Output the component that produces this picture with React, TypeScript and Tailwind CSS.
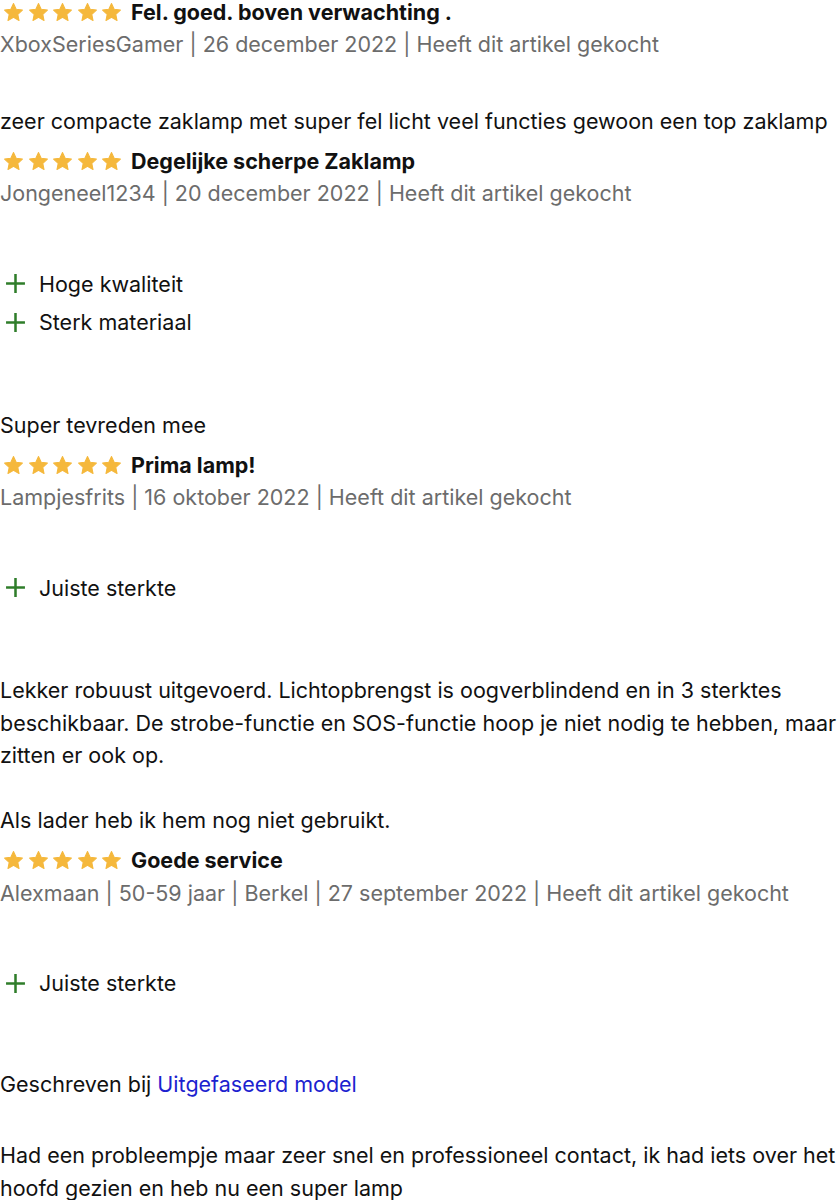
import React from 'react';

type Review = {
  title: string;
  meta: string;
  pros?: string[];
  writtenFor?: string;
  body: React.ReactNode;
};

const REVIEWS: Review[] = [
  {
    title: 'Fel. goed. boven verwachting .',
    meta: 'XboxSeriesGamer | 26 december 2022 | Heeft dit artikel gekocht',
    body: 'zeer compacte zaklamp met super fel licht veel functies gewoon een top zaklamp',
  },
  {
    title: 'Degelijke scherpe Zaklamp',
    meta: 'Jongeneel1234 | 20 december 2022 | Heeft dit artikel gekocht',
    pros: ['Hoge kwaliteit', 'Sterk materiaal'],
    body: 'Super tevreden mee',
  },
  {
    title: 'Prima lamp!',
    meta: 'Lampjesfrits | 16 oktober 2022 | Heeft dit artikel gekocht',
    pros: ['Juiste sterkte'],
    body: (
      <>
        Lekker robuust uitgevoerd. Lichtopbrengst is oogverblindend en in 3 sterktes beschikbaar. De strobe-functie
        en SOS-functie hoop je niet nodig te hebben, maar zitten er ook op.
        <br />
        <br />
        Als lader heb ik hem nog niet gebruikt.
      </>
    ),
  },
  {
    title: 'Goede service',
    meta: 'Alexmaan | 50-59 jaar | Berkel | 27 september 2022 | Heeft dit artikel gekocht',
    pros: ['Juiste sterkte'],
    writtenFor: 'Uitgefaseerd model',
    body: 'Had een probleempje maar zeer snel en professioneel contact, ik had iets over het hoofd gezien en heb nu een super lamp',
  },
];

function Star() {
  return (
    <svg viewBox="0 0 24 24" className="w-[21px] h-[21px] shrink-0">
      <path
        d="M12 1.8l3.05 6.55 7.15.85-5.28 4.9 1.4 7.08L12 17.6l-6.32 3.58 1.4-7.08L1.8 9.2l7.15-.85z"
        fill="#f5b83c"
        stroke="#f5b83c"
        strokeWidth="1.2"
        strokeLinejoin="round"
      />
    </svg>
  );
}

function Plus() {
  return (
    <svg viewBox="0 0 20 20" className="w-[21px] h-[21px] shrink-0">
      <path d="M10 1v18M1 10h18" stroke="#2f7d2a" strokeWidth="2.4" />
    </svg>
  );
}

export default function App() {
  return (
    <div
      className="w-[840px] -mt-[1px] bg-white text-[21.5px] text-[#111] leading-[32.5px]"
      style={{ fontFamily: 'Inter, "Noto Sans", sans-serif' }}
    >
      {REVIEWS.map((r, i) => (
        <div key={i} className={i === 0 ? '' : 'mt-[11px]'}>
          <div className="flex items-center h-[26px]">
            <div className="flex gap-[3.5px] pl-[3px]">
              {[0, 1, 2, 3, 4].map((s) => <Star key={s} />)}
            </div>
            <span className="ml-[9px] font-bold">{r.title}</span>
          </div>
          <div className="mt-[3px] text-[#6c6c6c]">{r.meta}</div>

          {r.pros && (
            <div className="mt-[58px] flex flex-col gap-[6px]">
              {r.pros.map((p) => (
                <div key={p} className="flex items-center gap-[13px] pl-[5px]">
                  <Plus />
                  <span>{p}</span>
                </div>
              ))}
            </div>
          )}

          {r.writtenFor && (
            <div className="mt-[68px]">
              Geschreven bij <span className="text-[#1c22cf]">{r.writtenFor}</span>
            </div>
          )}

          <p className={r.writtenFor ? 'mt-[39px]' : r.pros ? 'mt-[70px]' : 'mt-[44px]'}>{r.body}</p>
        </div>
      ))}
    </div>
  );
}
